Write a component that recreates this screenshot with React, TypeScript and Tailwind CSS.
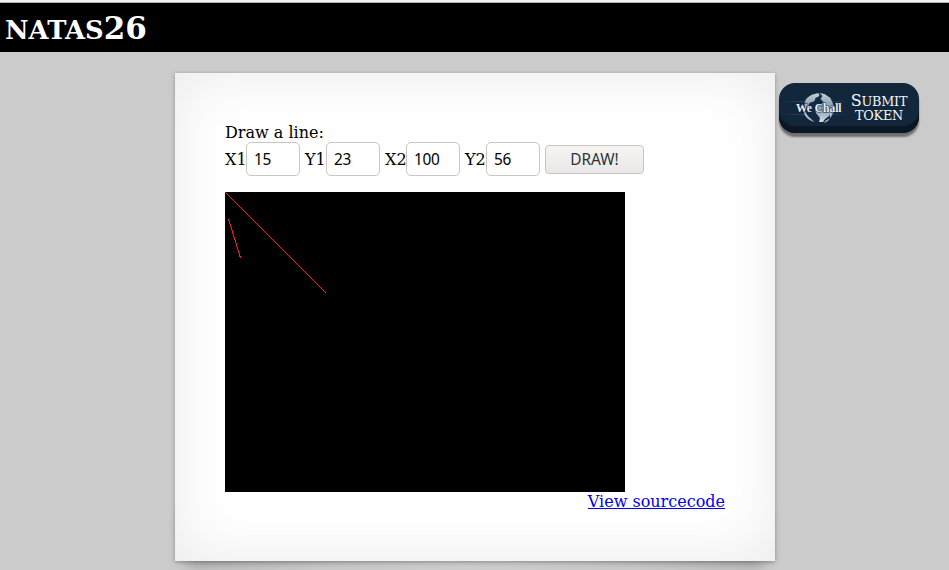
const fields = [
  { label: 'X1', value: '15' },
  { label: 'Y1', value: '23' },
  { label: 'X2', value: '100' },
  { label: 'Y2', value: '56' },
];

function WeChallLogo() {
  return (
    <svg className="h-[50px] w-[66px] shrink-0" viewBox="0 0 66 50">
      <defs>
        <linearGradient id="streak">
          <stop offset="0" stopColor="#48647e" stopOpacity="0" />
          <stop offset=".5" stopColor="#48647e" stopOpacity=".8" />
          <stop offset="1" stopColor="#48647e" stopOpacity="0" />
        </linearGradient>
        <linearGradient id="land" x1="0" y1="0" x2="0" y2="1">
          <stop offset="0" stopColor="#c3ced8" />
          <stop offset=".5" stopColor="#8499ad" />
          <stop offset="1" stopColor="#d0dae2" />
        </linearGradient>
      </defs>
      <path d="M0 18h66v1H0zM4 31h60v1H4z" fill="url(#streak)" />
      <circle cx="36" cy="25" r="14.500" fill="#132b42" />
      <path d="M23.500 17a15 15 0 0 1 9-6l4-1 1 3-4 2-1 3-5 2-2 4-3-1-1 3zM37.500 10l5 1 6 4 3 7v7l-3 6-2-6-4-2-4-5 3-3-3-3 2-3zM35 21l8 2 5 4-1 6-4 3-2 3-4 0 1-4-4-5-1-5z" fill="url(#land)" />
      <path d="M21.500 28c1 6 5 9 11 11-3-3-7-5-9-10z" fill="#b5c3cf" />
      <path d="M43 38l5-3-2 3-4 2z" fill="#9fb0c0" />
      <text
        x="14"
        y="28.500"
        textLength="45.500"
        lengthAdjust="spacingAndGlyphs"
        fontFamily="'Liberation Serif', serif"
        fontSize="11.500"
        fontWeight="700"
        fill="#e8eef4"
        stroke="#132b42"
        strokeWidth="1"
        paintOrder="stroke"
      >
        We Chall
      </text>
    </svg>
  );
}

export default function App() {
  return (
    <div className="h-[570px] w-[949px] overflow-hidden bg-[#cbcbcb] font-['DejaVu_Serif','Liberation_Serif',serif] text-[16px] leading-[19px] text-black">
      <div className="h-[3px] border-b border-[#b5b0ab] bg-[#f2f1f0]" />
      <h1 className="flex h-[49px] items-baseline bg-black pl-[5px] pt-[7px] text-[31px] font-bold leading-[37px] text-white">
        <span className="text-[25.8px]">NATAS</span>26
      </h1>
      <div className="flex items-start pl-[175px] pt-[21px]">
        <main className="relative isolate h-[488px] w-[600px] shrink-0">
          <div className="absolute bottom-[12px] left-[10px] -z-10 h-[10%] w-[50%] -rotate-[3deg] shadow-[0_8px_16px_rgba(0,0,0,0.3)]" />
          <div className="absolute bottom-[12px] right-[10px] -z-10 h-[10%] w-[50%] rotate-[3deg] shadow-[0_8px_16px_rgba(0,0,0,0.3)]" />
          <div className="h-full bg-white px-[50px] pt-[50px] shadow-[0_1px_4px_rgba(0,0,0,0.3),inset_0_0_60px_rgba(0,0,0,0.085)]">
            <p>Draw a line:</p>
            <form className="flex h-[34px] items-center gap-[5px]">
              {fields.map((f) => (
                <label key={f.label} className="flex w-[75px] items-center">
                  <span className="w-[21px] shrink-0">{f.label}</span>
                  <input
                    defaultValue={f.value}
                    className="h-[34px] w-[54px] shrink-0 rounded-[5px] border border-[#c9c5c0] bg-white px-[7px] font-['Noto_Sans',sans-serif] text-[15.4px] tracking-[-0.3px] outline-none"
                  />
                </label>
              ))}
              <button
                type="button"
                className="h-[29px] w-[99px] rounded-[4px] border border-[#c9c5c0] bg-linear-to-b from-[#f6f5f4] to-[#e9e8e6] font-['Noto_Sans',sans-serif] text-[15.4px] text-[#2e3436]"
              >
                DRAW!
              </button>
            </form>
            <svg className="mt-[16px] block h-[300px] w-[400px] bg-black" viewBox="0 0 400 300" shapeRendering="crispEdges">
              <path d="M0 0L101 101M3.500 27L15.500 66" stroke="#ff1a1a" strokeWidth="1" />
            </svg>
            <div className="text-right">
              <a href="#" className="text-[#0000ee] underline">View sourcecode</a>
            </div>
          </div>
        </main>
        <a
          href="#"
          className="ml-[4px] mt-[10px] flex h-[50px] w-[140px] shrink-0 items-start rounded-[16px] bg-[#12273b] pl-[3px] text-[#f4f6f8] shadow-[inset_0_-7px_0_#0b1722,0_4px_2px_rgba(0,0,0,0.45)]"
        >
          <WeChallLogo />
          <span className="flex w-[62px] shrink-0 flex-col items-center whitespace-nowrap pt-[11px] text-[12.8px] leading-[14px] tracking-[-0.25px]">
            <span className="flex items-baseline"><span className="text-[16px]">S</span>UBMIT</span>
            <span>TOKEN</span>
          </span>
        </a>
      </div>
    </div>
  );
}
